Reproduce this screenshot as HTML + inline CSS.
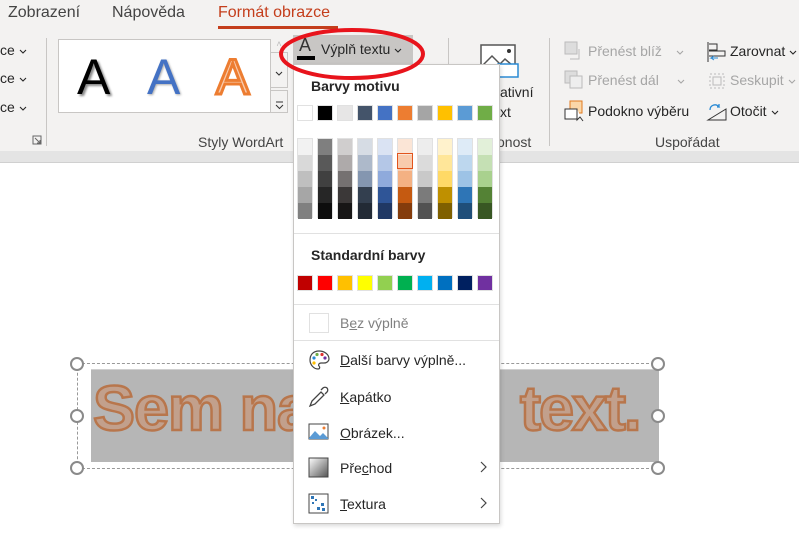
<!DOCTYPE html>
<html><head><meta charset="utf-8"><style>
*{margin:0;padding:0;box-sizing:border-box}
body{width:799px;height:540px;overflow:hidden;background:#fff;font-family:"Liberation Sans",sans-serif;position:relative;color:#262626}
.a{position:absolute;white-space:nowrap}
.t{font-size:16px;color:#444}
.s{font-size:14px}
.g{color:#a6a6a6}
.sw{position:absolute;width:16px;height:16px;border:1px solid #e1e1e1}
.mi{font-size:14px;color:#262626}
.ch{display:inline-block;width:8px;height:5px;margin-left:4px;vertical-align:middle}
</style></head><body>
<svg width="0" height="0" style="position:absolute"><defs><symbol id="chev" viewBox="0 0 8 5"><path d="M1 1l3 3 3-3" fill="none" stroke="currentColor" stroke-width="1.1"/></symbol></defs></svg>
<!-- ribbon -->
<div class="a" style="left:0;top:0;width:799px;height:151px;background:#f3f2f1"></div>
<div class="a" style="left:0;top:151px;width:799px;height:12px;background:#e4e4e4;border-bottom:1px solid #d0d0d0"></div>
<div class="a t" style="left:8px;top:4px">Zobrazení</div>
<div class="a t" style="left:112px;top:4px">Nápověda</div>
<div class="a t" style="left:218px;top:4px;color:#c43e1c">Formát obrazce</div>
<div class="a" style="left:218px;top:26px;width:120px;height:3px;background:#c43e1c"></div>
<div class="a s" style="left:0;top:42px">ce<svg class="ch"><use href="#chev"/></svg></div>
<div class="a s" style="left:0;top:70px">ce<svg class="ch"><use href="#chev"/></svg></div>
<div class="a s" style="left:0;top:99px">ce<svg class="ch"><use href="#chev"/></svg></div>
<svg class="a" style="left:32px;top:135px" width="10" height="10"><path d="M1 1h8v8H1z" fill="none" stroke="#666"/><path d="M3 3l5 5M8 5v3H5" fill="none" stroke="#666"/></svg>
<div class="a" style="left:46px;top:38px;width:1px;height:108px;background:#c8c6c4"></div>
<div class="a" style="left:58px;top:39px;width:213px;height:74px;background:#fff;border:1px solid #c8c6c4"></div>
<div class="a" style="left:77px;top:48px;font-size:50px;color:#000;text-shadow:2px 2px 2px #888">A</div>
<div class="a" style="left:147px;top:48px;font-size:50px;color:#4472c4;text-shadow:1px 1px 2px #aaa">A</div>
<div class="a" style="left:216px;top:48px;font-size:50px;color:#f8cbad;-webkit-text-stroke:3px #ed7d31">A</div>
<div class="a" style="left:270px;top:39px;width:18px;height:13px;font-size:9px;color:#bbb;text-align:center">˄</div>
<div class="a" style="left:270px;top:52px;width:18px;height:36px;border:1px solid #c8c6c4;text-align:center;padding-top:12px;color:#333"><svg class="ch" style="margin:0"><use href="#chev"/></svg></div>
<div class="a" style="left:270px;top:90px;width:18px;height:23px;border:1px solid #c8c6c4;text-align:center;padding-top:6px"><svg width="9" height="9"><path d="M1 1h7M1 4l3.5 3.5L8 4" fill="none" stroke="#333"/></svg></div>
<div class="a s" style="left:198px;top:134px;color:#444">Styly WordArt</div>
<div class="a" style="left:448px;top:38px;width:1px;height:108px;background:#c8c6c4"></div>
<svg class="a" style="left:480px;top:44px" width="40" height="36"><rect x="1" y="1" width="34" height="26" fill="#fff" stroke="#555" stroke-width="1.5"/><path d="M2 22 L12 12 L20 20 L25 15 L33 22" fill="none" stroke="#555" stroke-width="1.5"/><circle cx="29" cy="7" r="2" fill="#333"/><rect x="18" y="20" width="20" height="13" fill="#fff" stroke="#2a8ad4" stroke-width="1.5"/></svg>
<div class="a s" style="left:500px;top:84px">ativní</div>
<div class="a s" style="left:500px;top:104px">xt</div>
<div class="a s" style="left:497px;top:134px;color:#444">onost</div>
<div class="a" style="left:549px;top:38px;width:1px;height:108px;background:#c8c6c4"></div>
<svg class="a" style="left:564px;top:41px" width="20" height="20"><rect x="1" y="1" width="12" height="12" fill="#ddd" stroke="#bbb"/><path d="M15 8v10H6" fill="none" stroke="#bbb"/></svg>
<div class="a s g" style="left:588px;top:43px">Přenést blíž <svg class="ch" style="margin-left:10px"><use href="#chev"/></svg></div>
<svg class="a" style="left:564px;top:70px" width="20" height="20"><rect x="1" y="1" width="12" height="12" fill="#ddd" stroke="#bbb"/><rect x="6" y="6" width="12" height="12" fill="#eee" stroke="#bbb"/></svg>
<div class="a s g" style="left:588px;top:72px">Přenést dál <svg class="ch" style="margin-left:14px"><use href="#chev"/></svg></div>
<svg class="a" style="left:564px;top:100px" width="22" height="22"><rect x="6" y="1" width="12" height="12" fill="#fbd7a8" stroke="#e07b20"/><rect x="1" y="9" width="12" height="10" fill="#fff" stroke="#333"/><path d="M13 9 L13 20 L16 17 L19 21" fill="#fff" stroke="#333"/></svg>
<div class="a s" style="left:588px;top:103px">Podokno výběru</div>
<svg class="a" style="left:706px;top:41px" width="22" height="22"><path d="M2 1v20M3 3h8v6H3M3 10h16v5H3" fill="none" stroke="#333"/><path d="M12 17H5l3-2M5 17l3 2" fill="none" stroke="#2a8ad4"/></svg>
<div class="a s" style="left:730px;top:43px">Zarovnat<svg class="ch"><use href="#chev"/></svg></div>
<svg class="a" style="left:706px;top:70px" width="22" height="22"><rect x="4" y="4" width="14" height="14" fill="none" stroke="#bbb" stroke-dasharray="2 2"/><rect x="7" y="7" width="8" height="8" fill="none" stroke="#bbb"/></svg>
<div class="a s g" style="left:730px;top:72px">Seskupit<svg class="ch"><use href="#chev"/></svg></div>
<svg class="a" style="left:706px;top:100px" width="22" height="22"><path d="M2 20L20 9v11z" fill="none" stroke="#333"/><path d="M4 10c0-5 6-7 9-3l-2 0M13 7l0-3" fill="none" stroke="#2a8ad4" stroke-width="1.3"/></svg>
<div class="a s" style="left:730px;top:103px">Otočit<svg class="ch"><use href="#chev"/></svg></div>
<div class="a s" style="left:655px;top:134px;color:#444">Uspořádat</div>

<!-- slide textbox -->
<div class="a" style="left:77px;top:363px;width:582px;height:106px;border:1px dashed #999"></div>
<div class="a" style="left:91px;top:369px;width:568px;height:93px;background:#b6b6b6;border-top:1px solid #d0d0d0"></div>
<div class="a" style="left:93px;top:373px;font-size:63px;font-weight:bold;color:#c2a08c;-webkit-text-stroke:2.5px #b8764c;letter-spacing:-1px">Sem na</div>
<div class="a" style="left:520px;top:373px;font-size:63px;font-weight:bold;color:#c2a08c;-webkit-text-stroke:2.5px #b8764c;letter-spacing:-2px">text.</div>
<div class="a" style="left:70px;top:357px;width:14px;height:14px;border:2px solid #8a8a8a;border-radius:50%;background:#fff"></div>
<div class="a" style="left:70px;top:409px;width:14px;height:14px;border:2px solid #8a8a8a;border-radius:50%;background:#fff"></div>
<div class="a" style="left:70px;top:461px;width:14px;height:14px;border:2px solid #8a8a8a;border-radius:50%;background:#fff"></div>
<div class="a" style="left:651px;top:357px;width:14px;height:14px;border:2px solid #8a8a8a;border-radius:50%;background:#fff"></div>
<div class="a" style="left:651px;top:409px;width:14px;height:14px;border:2px solid #8a8a8a;border-radius:50%;background:#fff"></div>
<div class="a" style="left:651px;top:461px;width:14px;height:14px;border:2px solid #8a8a8a;border-radius:50%;background:#fff"></div>

<!-- button -->
<div class="a" style="left:293px;top:35px;width:120px;height:29px;background:#c8c6c4"></div>
<div class="a" style="left:299px;top:35px;font-size:18px;color:#333">A</div>
<div class="a" style="left:297px;top:56px;width:18px;height:4px;background:#000"></div>
<div class="a s" style="left:321px;top:41px">Výplň textu<svg class="ch"><use href="#chev"/></svg></div>

<!-- dropdown -->
<div class="a" style="left:293px;top:64px;width:207px;height:460px;background:#fff;border:1px solid #c8c6c4;box-shadow:1px 2px 4px rgba(0,0,0,.15)"></div>
<div class="a" style="left:311px;top:78px;font-size:14px;font-weight:bold;color:#262626">Barvy motivu</div>
<div id="c"></div>
<div class="a" style="left:294px;top:233px;width:205px;height:1px;background:#e1e1e1"></div>
<div class="a" style="left:311px;top:247px;font-size:14px;font-weight:bold;color:#262626">Standardní barvy</div>
<div class="a" style="left:294px;top:304px;width:205px;height:1px;background:#e1e1e1"></div>
<div class="a" style="left:309px;top:313px;width:20px;height:20px;border:1px solid #e1e1e1"></div>
<div class="a mi" style="left:340px;top:315px;color:#808080">B<u>e</u>z výplně</div>
<div class="a" style="left:294px;top:340px;width:205px;height:1px;background:#e1e1e1"></div>
<svg class="a" style="left:308px;top:349px" width="22" height="22"><path d="M11 2C5 2 2 6 2 11c0 5 4 9 8 9 2 0 2-2 1-3s0-3 2-3h3c3 0 5-2 5-4 0-5-5-8-10-8z" fill="#fff" stroke="#444" stroke-width="1.2"/><circle cx="6" cy="9" r="1.6" fill="#2a8ad4"/><circle cx="9" cy="5.5" r="1.6" fill="#70ad47"/><circle cx="14" cy="5.5" r="1.6" fill="#e03030"/><circle cx="17" cy="9" r="1.6" fill="#7030a0"/><circle cx="6" cy="14" r="1.6" fill="#ffc000"/></svg>
<div class="a mi" style="left:340px;top:352px"><u>D</u>alší barvy výplně...</div>
<svg class="a" style="left:308px;top:386px" width="22" height="22"><path d="M2 20l2-5 9-9 3 3-9 9z" fill="#fff" stroke="#444" stroke-width="1.3"/><path d="M13 4l2-2c1-1 3-1 4 0s1 3 0 4l-2 2" fill="none" stroke="#444" stroke-width="1.3"/></svg>
<div class="a mi" style="left:340px;top:389px"><u>K</u>apátko</div>
<svg class="a" style="left:308px;top:422px" width="22" height="20"><rect x="1" y="2" width="19" height="15" fill="#fff" stroke="#444"/><path d="M1 16l6-7 5 5 3-3 5 5v1H1z" fill="#5b9bd5"/><circle cx="16" cy="6" r="1.5" fill="#ed7d31"/></svg>
<div class="a mi" style="left:340px;top:425px"><u>O</u>brázek...</div>
<svg class="a" style="left:308px;top:457px" width="22" height="22"><defs><linearGradient id="gr" x1="0" y1="0" x2="1" y2="1"><stop offset="0" stop-color="#fff"/><stop offset="1" stop-color="#555"/></linearGradient></defs><rect x="1" y="1" width="19" height="19" fill="url(#gr)" stroke="#444"/></svg>
<div class="a mi" style="left:340px;top:460px">Pře<u>c</u>hod</div>
<svg class="a" style="left:480px;top:461px" width="8" height="12"><path d="M1 1l5 5-5 5" fill="none" stroke="#444" stroke-width="1.2"/></svg>
<svg class="a" style="left:308px;top:493px" width="22" height="22"><rect x="1" y="1" width="19" height="19" fill="#fff" stroke="#444"/><g fill="#2e75b6"><rect x="3" y="3" width="3" height="3"/><rect x="7" y="6" width="2" height="2"/><rect x="13" y="10" width="3" height="3"/><rect x="9" y="14" width="3" height="3"/><rect x="14" y="15" width="3" height="3"/><rect x="4" y="9" width="2" height="2"/></g></svg>
<div class="a mi" style="left:340px;top:496px"><u>T</u>extura</div>
<svg class="a" style="left:480px;top:497px" width="8" height="12"><path d="M1 1l5 5-5 5" fill="none" stroke="#444" stroke-width="1.2"/></svg>

<!-- red ellipse -->
<svg class="a" style="left:0;top:0" width="799" height="100"><ellipse cx="352" cy="54" rx="71" ry="24" fill="none" stroke="#e8141c" stroke-width="4"/></svg>

<script>
var th=["ffffff","000000","e7e6e6","44546a","4472c4","ed7d31","a5a5a5","ffc000","5b9bd5","70ad47"];
var sh=[["f2f2f2","d9d9d9","bfbfbf","a6a6a6","808080"],["7f7f7f","595959","404040","262626","0d0d0d"],["d0cece","aeaaaa","757171","3b3838","171616"],["d6dce4","adb9ca","8496b0","333f4f","222a35"],["dae3f3","b4c7e7","8faadc","2f5597","203864"],["fbe5d6","f8cbad","f4b183","c55a11","843c0c"],["ededed","dbdbdb","c9c9c9","7b7b7b","525252"],["fff2cc","ffe699","ffd966","bf9000","7f6000"],["deebf7","bdd7ee","9dc3e6","2e75b6","1f4e79"],["e2f0d9","c5e0b4","a9d18e","548235","385723"]];
var st=["c00000","ff0000","ffc000","ffff00","92d050","00b050","00b0f0","0070c0","002060","7030a0"];
var h="";
for(var i=0;i<10;i++){var x=297+i*20;
h+='<div class="sw" style="left:'+x+'px;top:105px;background:#'+th[i]+'"></div>';
h+='<div class="a" style="left:'+x+'px;top:138px;width:16px;height:80px;border:1px solid #e1e1e1"></div>';
for(var j=0;j<5;j++)h+='<div class="a" style="left:'+(x+1)+'px;top:'+(139+j*16)+'px;width:14px;height:16px;background:#'+sh[i][j]+'"></div>';
h+='<div class="sw" style="left:'+x+'px;top:275px;background:#'+st[i]+'"></div>';}
h+='<div class="a" style="left:397px;top:153px;width:16px;height:16px;border:1px solid #e2541c"></div>';
document.getElementById("c").innerHTML=h;
</script>
</body></html>
